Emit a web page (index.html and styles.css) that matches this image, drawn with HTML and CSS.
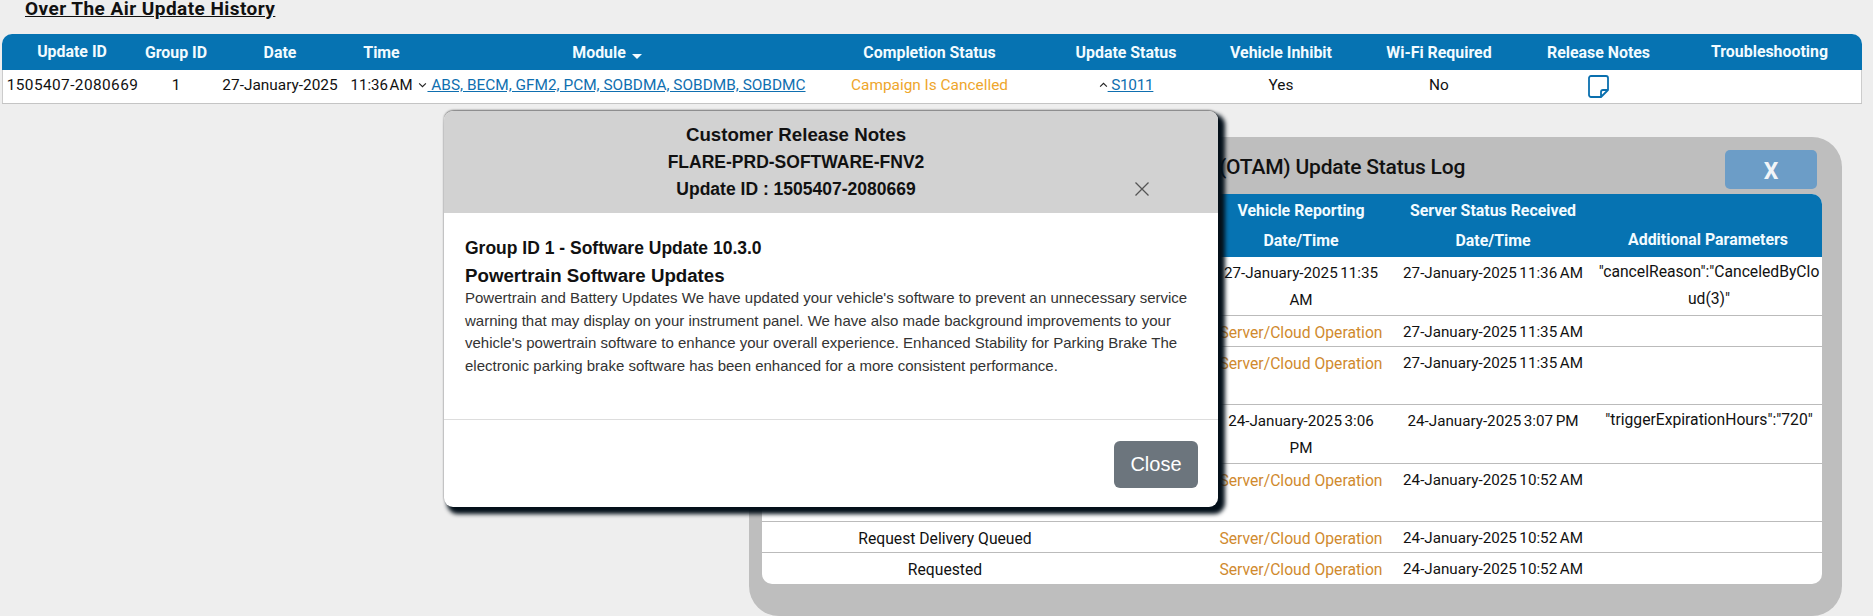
FILE: index.html
```html
<!DOCTYPE html>
<html lang="en">
<head>
    <meta charset="UTF-8">
    <title>Over The Air Update History</title>
    <link rel="stylesheet" href="styles.css">
</head>
<body>
    <h1 class="page_title">Over The Air Update History</h1>

    <div class="history_wrap">
        <table class="history">
            <colgroup>
                <col class="c_id"><col class="c_group"><col class="c_date"><col class="c_time"><col class="c_module">
                <col class="c_completion"><col class="c_status"><col class="c_inhibit"><col class="c_wifi"><col class="c_notes"><col class="c_trouble">
            </colgroup>
            <thead>
                <tr>
                    <th class="raised">Update ID</th>
                    <th>Group ID</th>
                    <th>Date</th>
                    <th>Time</th>
                    <th class="module_head">Module <span class="sort_arrow"></span></th>
                    <th>Completion Status</th>
                    <th>Update Status</th>
                    <th>Vehicle Inhibit</th>
                    <th>Wi-Fi Required</th>
                    <th>Release Notes</th>
                    <th class="raised">Troubleshooting</th>
                </tr>
            </thead>
            <tbody>
                <tr>
                    <td class="update_id">1505407-2080669</td>
                    <td>1</td>
                    <td>27-January-2025</td>
                    <td class="time">11:36 AM</td>
                    <td>
                        <svg class="caret" viewBox="0 0 8 5"><path d="M1 1l3 3 3-3" fill="none" stroke="#222" stroke-width="1"/></svg><a href="#">&nbsp;ABS, BECM, GFM2, PCM, SOBDMA, SOBDMB, SOBDMC</a>
                    </td>
                    <td class="amber">Campaign Is Cancelled</td>
                    <td>
                        <svg class="caret" viewBox="0 0 8 5"><path d="M1 4l3-3 3 3" fill="none" stroke="#222" stroke-width="1"/></svg><a class="tight" href="#">&nbsp;S1011</a>
                    </td>
                    <td>Yes</td>
                    <td>No</td>
                    <td>
                        <svg class="note_icon" viewBox="0 0 21 23"><path d="M3 1h15a2 2 0 0 1 2 2v12l-7 7H3a2 2 0 0 1-2-2V3a2 2 0 0 1 2-2zM20 15h-5a2 2 0 0 0-2 2v5" fill="none" stroke="#0a6fae" stroke-width="1.8" stroke-linejoin="round"/></svg>
                    </td>
                    <td></td>
                </tr>
            </tbody>
        </table>
    </div>

    <!-- status log sits behind the release notes popup -->
    <div class="log_panel">
        <div class="log_head">
            <h2 class="log_title">(OTAM) Update Status Log</h2>
            <button class="log_close">X</button>
        </div>
        <table class="log">
            <colgroup>
                <col class="l_state"><col class="l_blank"><col class="l_vehicle"><col class="l_server"><col class="l_params">
            </colgroup>
            <thead>
                <tr>
                    <th></th>
                    <th></th>
                    <th>Vehicle Reporting<br>Date/Time</th>
                    <th>Server Status Received<br>Date/Time</th>
                    <th class="bottom">Additional Parameters</th>
                </tr>
            </thead>
            <tbody>
                <tr class="two">
                    <td></td><td></td>
                    <td class="stamp">27-January-2025 11:35 AM</td>
                    <td class="stamp nowrap">27-January-2025 11:36 AM</td>
                    <td class="params">"cancelReason":"CanceledByCloud(3)"</td>
                </tr>
                <tr class="one">
                    <td></td><td></td>
                    <td class="orange">Server/Cloud Operation</td>
                    <td class="stamp nowrap">27-January-2025 11:35 AM</td>
                    <td></td>
                </tr>
                <tr class="two">
                    <td></td><td></td>
                    <td class="orange">Server/Cloud Operation</td>
                    <td class="stamp nowrap">27-January-2025 11:35 AM</td>
                    <td></td>
                </tr>
                <tr class="two">
                    <td></td><td></td>
                    <td class="stamp">24-January-2025 3:06 PM</td>
                    <td class="stamp nowrap">24-January-2025 3:07 PM</td>
                    <td class="params">"triggerExpirationHours":"720"</td>
                </tr>
                <tr class="two">
                    <td></td><td></td>
                    <td class="orange">Server/Cloud Operation</td>
                    <td class="stamp nowrap">24-January-2025 10:52 AM</td>
                    <td></td>
                </tr>
                <tr class="one">
                    <td>Request Delivery Queued</td><td></td>
                    <td class="orange">Server/Cloud Operation</td>
                    <td class="stamp nowrap">24-January-2025 10:52 AM</td>
                    <td></td>
                </tr>
                <tr class="one">
                    <td>Requested</td><td></td>
                    <td class="orange">Server/Cloud Operation</td>
                    <td class="stamp nowrap">24-January-2025 10:52 AM</td>
                    <td></td>
                </tr>
            </tbody>
        </table>
    </div>

    <div class="notes_modal">
        <div class="notes_head">
            <div class="notes_title">
                <span class="big">Customer Release Notes</span><br>
                FLARE-PRD-SOFTWARE-FNV2<br>
                Update ID : 1505407-2080669
            </div>
            <svg class="notes_x" viewBox="0 0 16 16"><path d="M1.5 1.5l13 13M14.5 1.5l-13 13" fill="none" stroke="#555" stroke-width="1.3"/></svg>
        </div>
        <div class="notes_body">
            <h3>Group ID 1 - Software Update 10.3.0</h3>
            <h3 class="big">Powertrain Software Updates</h3>
            <p>Powertrain and Battery Updates We have updated your vehicle's software to prevent an unnecessary service warning that may display on your instrument panel. We have also made background improvements to your vehicle's powertrain software to enhance your overall experience. Enhanced Stability for Parking Brake The electronic parking brake software has been enhanced for a more consistent performance.</p>
        </div>
        <div class="notes_foot">
            <button class="notes_close">Close</button>
        </div>
    </div>
</body>
</html>
```

FILE: styles.css
```css
body {
    margin: 0;
    height: 616px;
    overflow: hidden;
    position: relative;
    background-color: #eeeeee;
    color: #111;
    font-family: Roboto, "Liberation Sans", sans-serif;
    font-size: 15.4px;
}

.page_title {
    margin: 0 0 0 25px;
    height: 34px;
    font-size: 19px;
    line-height: 17px;
    font-weight: 700;
    letter-spacing: 0.45px;
    text-decoration: underline;
    color: #111;
}

a {
    color: #0f6fb0;
}

a.tight {
    letter-spacing: -0.3px;
}

.history_wrap {
    width: 1860px;
    margin-left: 2px;
    border-radius: 10px 10px 0 0;
    overflow: hidden;
    background-color: #fff;
    border-bottom: 1px solid #c4c4c4;
}

table {
    border-collapse: separate;
    border-spacing: 0;
    table-layout: fixed;
    text-align: center;
}

.history {
    width: 1860px;
}

.c_id { width: 140px; }
.c_group { width: 68px; }
.c_date { width: 140px; }
.c_time { width: 63px; }
.c_module { width: 398px; }
.c_completion { width: 237px; }
.c_status { width: 156px; }
.c_inhibit { width: 154px; }
.c_wifi { width: 162px; }
.c_notes { width: 157px; }
.c_trouble { width: 185px; }

.history th {
    box-sizing: border-box;
    height: 36px;
    padding: 1px 0 0;
    background-color: #0673b2;
    color: #f2fbff;
    font-size: 15.9px;
    font-weight: 700;
    white-space: nowrap;
}

.history th.raised {
    padding: 0 0 2px;
}

.module_head {
    padding-right: 10px !important;
}

.sort_arrow {
    display: inline-block;
    width: 0;
    height: 0;
    margin-left: 2px;
    border-left: 5px solid transparent;
    border-right: 5px solid transparent;
    border-top: 5px solid #f2fbff;
    vertical-align: -1px;
}

.history td {
    box-sizing: border-box;
    height: 33px;
    padding: 0 0 3px;
    background-color: #fff;
    white-space: nowrap;
}

.history td:first-child {
    border-left: 1px solid #ccc;
}

.history td:last-child {
    border-right: 1px solid #ccc;
}

.update_id {
    letter-spacing: 0.42px;
}

.time {
    font-size: 15px;
    word-spacing: -2px;
}

.caret {
    width: 9px;
    height: 6px;
    vertical-align: 2px;
}

.note_icon {
    display: block;
    width: 21px;
    height: 23px;
    margin: 0 auto;
    position: relative;
    top: 1px;
}

.amber {
    color: #eea62c;
}

.orange {
    color: #d08a2e;
}

/* status log */
.log_panel {
    position: absolute;
    left: 749px;
    top: 137px;
    width: 1093px;
    height: 479px;
    padding: 13px 20px 33px 13px;
    box-sizing: border-box;
    border-radius: 30px;
    background-color: #bebebe;
}

.log_head {
    display: flex;
    justify-content: space-between;
    align-items: flex-start;
    height: 44px;
    padding: 0 5px 0 457px;
}

.log_title {
    margin: 0;
    padding-top: 4px;
    font-size: 21px;
    line-height: 27px;
    font-weight: 500;
    letter-spacing: -0.2px;
    white-space: nowrap;
    color: #111;
}

.log_close {
    width: 92px;
    height: 39px;
    margin: 0;
    padding: 4px 0 0;
    border: 0;
    border-radius: 5px;
    background-color: #6c9dc7;
    color: #f2f5f8;
    font-family: Roboto, sans-serif;
    font-size: 23px;
    font-weight: 700;
}

.log {
    width: 1060px;
    border-radius: 10px;
    overflow: hidden;
    background-color: #fff;
    font-size: 15.7px;
}

.l_state { width: 366px; }
.l_blank { width: 82px; }
.l_vehicle { width: 182px; }
.l_server { width: 202px; }
.l_params { width: 228px; }

.log th {
    box-sizing: border-box;
    height: 63px;
    padding: 0;
    background-color: #0673b2;
    color: #f2fbff;
    font-size: 15.9px;
    line-height: 30px;
    font-weight: 700;
}

.log th.bottom {
    vertical-align: bottom;
    padding-bottom: 2px;
}

.log td {
    box-sizing: border-box;
    padding: 3px 8px 0;
    line-height: 27px;
    vertical-align: top;
    border-bottom: 1px solid #bbb;
}

.log tr:last-child td {
    border-bottom: 0;
}

.log td.orange {
    padding: 3px 0 0;
    white-space: nowrap;
}

.log td.stamp {
    font-size: 15.2px;
    word-spacing: -1.2px;
}

.log td.nowrap {
    padding: 3px 0 0;
    white-space: nowrap;
}

.log tr.one td { height: 31px; }
.log tr.two td { height: 58.5px; }

.log td.params {
    padding: 1px 0 0 2px;
    word-break: break-all;
}

/* release notes popup */
.notes_modal {
    position: absolute;
    left: 444px;
    top: 111px;
    width: 774px;
    height: 396px;
    border-radius: 9px;
    background-color: #fff;
    font-family: "Liberation Sans", Arial, sans-serif;
    box-shadow: 5px 5px 4px 2px #04101a, 0 -1px 2px rgba(0, 0, 0, 0.5);
}

.notes_head {
    display: flex;
    align-items: flex-start;
    height: 102px;
    box-sizing: border-box;
    padding: 10px 68px 0 0;
    border-radius: 9px 9px 0 0;
    background-color: #d2d2d2;
}

.notes_title {
    flex: 1;
    padding-left: 14px;
    text-align: center;
    font-size: 17.5px;
    line-height: 27px;
    font-weight: 700;
    color: #111;
}

.big {
    font-size: 18.7px !important;
}

.notes_x {
    width: 16px;
    height: 16px;
    margin-top: 60px;
}

.notes_body {
    height: 206px;
    box-sizing: border-box;
    padding: 22px 21px 0;
}

.notes_body h3 {
    margin: 0;
    font-size: 17.5px;
    line-height: 27px;
    font-weight: 700;
    color: #111;
}

.notes_body p {
    margin: -2px 0 0;
    font-size: 15px;
    line-height: 22.5px;
    color: #333;
}

.notes_foot {
    display: flex;
    justify-content: flex-end;
    padding: 21px 20px 0;
    border-top: 1px solid #ddd;
}

.notes_close {
    width: 84px;
    height: 47px;
    padding: 0;
    border: 0;
    border-radius: 6px;
    background-color: #6c757d;
    color: #fff;
    font-family: "Liberation Sans", Arial, sans-serif;
    font-size: 20px;
}
```
